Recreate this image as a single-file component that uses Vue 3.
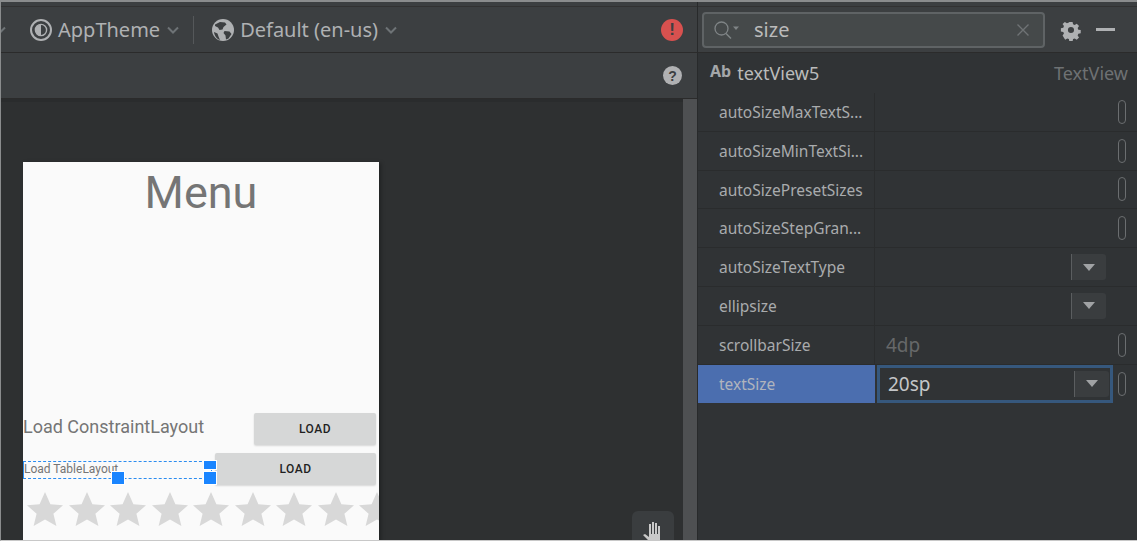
<script setup>
const rows = [
  { name: 'autoSizeMaxTextS...', kind: 'toggle' },
  { name: 'autoSizeMinTextSi...', kind: 'toggle' },
  { name: 'autoSizePresetSizes', kind: 'toggle' },
  { name: 'autoSizeStepGran...', kind: 'toggle' },
  { name: 'autoSizeTextType', kind: 'select' },
  { name: 'ellipsize', kind: 'select' },
  { name: 'scrollbarSize', kind: 'value', value: '4dp' },
]
const stars = Array.from({ length: 9 })
</script>

<template>
  <div class="frame">
    <section class="editor">
      <div class="toolbar top">
        <svg class="chev first" viewBox="0 0 12 8" width="12" height="8"><path d="M1 1.5 6 6.5 11 1.5" /></svg>
        <svg class="icon theme" viewBox="0 0 24 24" width="24" height="24">
          <circle cx="12" cy="12" r="10" fill="none" stroke="#afb1b3" stroke-width="2" />
          <circle cx="12" cy="12" r="5.6" fill="none" stroke="#afb1b3" stroke-width="1.4" />
          <path d="M12 6.4a5.6 5.6 0 0 0 0 11.2z" fill="#afb1b3" />
        </svg>
        <span class="tool-label theme-label">AppTheme</span>
        <svg class="chev" viewBox="0 0 12 8" width="12" height="8"><path d="M1 1.5 6 6.5 11 1.5" /></svg>
        <span class="vsep"></span>
        <svg class="icon globe" viewBox="0 0 24 24" width="24" height="24">
          <circle cx="12" cy="12" r="11" fill="#afb1b3" />
          <path d="M4 6.5 9 4l5 .5 1.500 2-3 2.500-1 2.500-3 .5-1.500-2.500L4 8zM13.500 13l5 .5 2 2.500-3 4.500-2.500 1-.5-4-2-2.500zM3 14l3.500 1.500 1 3 1.500 3.500C6 21 3.500 18 3 14z" fill="#3c3f41" />
        </svg>
        <span class="tool-label">Default (en-us)</span>
        <svg class="chev" viewBox="0 0 12 8" width="12" height="8"><path d="M1 1.5 6 6.5 11 1.5" /></svg>
        <span class="spring"></span>
        <span class="badge error">!</span>
      </div>
      <div class="toolbar second">
        <span class="spring"></span>
        <span class="badge help">?</span>
      </div>
      <div class="canvas">
        <div class="device">
          <h1 class="menu-title">Menu</h1>
          <div class="row-one">
            <span class="load-big">Load ConstraintLayout</span>
            <span class="android-btn small">LOAD</span>
          </div>
          <div class="row-two">
            <div class="selected">
              <span class="load-small">Load TableLayout</span>
              <i class="handle h-bottom"></i>
              <i class="handle h-right-top"></i>
              <i class="handle h-right-bottom"></i>
            </div>
            <span class="android-btn wide">LOAD</span>
          </div>
          <div class="stars">
            <svg v-for="(s, i) in stars" :key="i" class="star" viewBox="0 0 36 34" width="36" height="34">
              <path d="M18 0l5.400 12.200 12.600 1-9.600 8.600 3 12.200L18 27.400 6.600 34l3-12.200L0 13.200l12.600-1z" />
            </svg>
          </div>
        </div>
        <div class="hand-box">
          <svg viewBox="0 0 24 28" width="24" height="28">
            <path d="M8 22 2 16l2-1 4 3V5h2v10h1V3h2v12h1V4h2v11h1V7h2v15z" fill="#c9c9c9" />
          </svg>
        </div>
        <div class="scrollbar"></div>
      </div>
    </section>

    <aside class="panel">
      <div class="search-row">
        <div class="search">
          <svg class="loupe" viewBox="0 0 28 20" width="28" height="20">
            <circle cx="8.500" cy="8.500" r="6.500" fill="none" stroke="#7f8486" stroke-width="1.300" />
            <path d="M13 13.500 18 18.500" stroke="#7f8486" stroke-width="1.500" />
            <path d="M20 6.500h6l-3 3.500z" fill="#7f8486" />
          </svg>
          <span class="query">size</span>
          <svg class="clear" viewBox="0 0 12 12" width="12" height="12"><path d="M.5.5l11 11M11.500.5l-11 11" /></svg>
        </div>
        <svg class="gear" viewBox="0 0 24 24" width="22" height="22">
          <path fill-rule="evenodd" d="M10 2h4l.6 3 2 .9 2.600-1.700 2.800 2.800-1.700 2.600.8 2 3 .6v4l-3 .6-.8 2 1.700 2.600-2.800 2.800-2.600-1.700-2 .8-.6 3h-4l-.6-3-2-.8-2.600 1.700L1.600 19l1.700-2.600-.8-2-3-.6v-4l3-.6.8-2L1.600 4.600 4.400 2l2.600 1.700 2.400-.8zM12 8.200a3.800 3.800 0 1 0 0 7.600 3.800 3.800 0 0 0 0-7.600z" fill="#afb1b3" transform="translate(1.400 1.400) scale(.88)" />
        </svg>
        <span class="minimize"></span>
      </div>
      <div class="title-row">
        <span class="ab">Ab</span>
        <span class="view-id">textView5</span>
        <span class="view-type">TextView</span>
      </div>
      <div v-for="row in rows" :key="row.name" class="attr">
        <div class="attr-name">{{ row.name }}</div>
        <div class="attr-value">
          <span v-if="row.kind === 'value'" class="muted">{{ row.value }}</span>
          <span v-if="row.kind === 'select'" class="dd"><i></i></span>
          <span v-if="row.kind !== 'select'" class="pill"></span>
        </div>
      </div>
      <div class="attr active">
        <div class="attr-name">textSize</div>
        <div class="attr-value">
          <div class="input">
            <span>20sp</span>
            <span class="dd"><i></i></span>
          </div>
          <span class="pill"></span>
        </div>
      </div>
    </aside>
  </div>
</template>

<style>
html, body { margin: 0; background: #2f3233; overflow: hidden; }
</style>

<style scoped>
.frame {
  box-sizing: border-box;
  width: 1137px;
  height: 541px;
  display: flex;
  border-top: 2px solid #8a8c8d;
  border-left: 1px solid #8a8c8d;
  border-bottom: 1px solid #c8c8c8;
  background: #313335;
  font-family: "Noto Sans", "Open Sans", sans-serif;
  overflow: hidden;
}
.editor { width: 696px; display: flex; flex-direction: column; flex: none; }
.toolbar {
  display: flex;
  align-items: center;
  box-sizing: border-box;
  background: #3c3f41;
}
.top {
  height: 51px;
  padding: 5px 14px 0 0;
  border-bottom: 1px solid #2b2b2b;
  box-shadow: inset 0 4px 0 #3c3f41, inset 0 5px 0 #323232;
}
.second { height: 46px; padding-right: 15px; border-bottom: 1px solid #2b2b2b; }
.chev { fill: none; stroke: #6e7376; stroke-width: 2; flex: none; }
.chev.first { margin-left: -7px; margin-right: 23px; }
.icon { flex: none; }
.tool-label { color: #afb1b3; font-size: 20px; margin-left: 5px; margin-right: 7px; white-space: nowrap; }
.vsep { width: 1px; height: 28px; background: #55585a; margin: 0 17px 0 14px; }
.spring { flex: 1; }
.badge {
  width: 22px;
  height: 22px;
  border-radius: 50%;
  display: flex;
  align-items: center;
  justify-content: center;
  font-family: "Liberation Sans", sans-serif;
  font-weight: 700;
  font-size: 17px;
}
.error { background: #d8514f; color: #3c3f41; }
.help { width: 19px; height: 19px; background: #b0b1b3; color: #3c3f41; font-size: 14px; }
.canvas {
  flex: 1;
  position: relative;
  background: #2e3031;
  box-shadow: inset 0 3px 0 #2a2c2d;
  padding: 63px 0 0 22px;
  overflow: hidden;
}
.device {
  width: 356px;
  height: 400px;
  background: #fafafa;
  box-shadow: 2px 1px 4px rgba(0, 0, 0, .3);
  overflow: hidden;
}
.menu-title {
  margin: 0;
  text-align: center;
  font: 400 45px/61px Roboto, sans-serif;
  color: #757575;
}
.row-one {
  display: flex;
  align-items: center;
  justify-content: space-between;
  margin-top: 190px;
  padding-right: 3px;
}
.load-big { font: 400 18px/32px Roboto, sans-serif; color: #757575; position: relative; top: -2px; }
.android-btn {
  display: flex;
  align-items: center;
  justify-content: center;
  background: #d6d7d7;
  color: #1f1f1f;
  font: 500 12px/1 Roboto, sans-serif;
  letter-spacing: .5px;
  border-radius: 2px;
  box-shadow: 0 1px 2px rgba(0, 0, 0, .14);
}
.small { width: 122px; height: 32px; }
.row-two { display: flex; align-items: flex-start; margin-top: 8px; padding-right: 3px; justify-content: space-between; }
.wide { width: 161px; height: 32px; }
.selected {
  position: relative;
  box-sizing: border-box;
  width: 189px;
  height: 18px;
  margin-top: 8px;
  border: 1px solid #2b8cf0;
  border-style: dashed solid;
}
.load-small { display: block; font: 400 12px/14px Roboto, sans-serif; color: #757575; white-space: nowrap; }
.handle {
  position: absolute;
  width: 12px;
  height: 12px;
  background: #1a85ff;
  border: 1px solid #fff;
}
.h-bottom { left: 87px; top: 9px; }
.h-right-top { right: -6px; top: -2px; height: 8px; }
.h-right-bottom { right: -6px; top: 9px; }
.stars { display: flex; gap: 5.500px; padding: 7px 0 0 4px; width: 380px; }
.star { flex: none; fill: #d8d8d8; }
.hand-box {
  position: absolute;
  left: 631px;
  top: 412px;
  width: 42px;
  height: 42px;
  background: #3a3d3f;
  border-radius: 6px;
  display: flex;
  justify-content: center;
  padding-top: 8px;
  box-sizing: border-box;
}
.scrollbar { position: absolute; right: 0; top: 0; bottom: 0; width: 14px; background: #4e5052; }
.panel {
  flex: 1;
  background: #303335;
  border-left: 1px solid #282a2b;
  box-sizing: border-box;
}
.search-row {
  box-sizing: border-box;
  height: 51px;
  padding: 5px 11px 0 4px;
  display: flex;
  align-items: center;
  background: #3c3f41;
  border-bottom: 1px solid #2b2b2b;
  box-shadow: inset 0 4px 0 #3c3f41, inset 0 5px 0 #323232;
}
.search {
  box-sizing: border-box;
  width: 343px;
  height: 36px;
  border: 2px solid #5f6365;
  border-radius: 4px;
  background: #45494a;
  display: flex;
  align-items: center;
  padding: 0 14px 0 9px;
}
.query { color: #bbbbbb; font-size: 20px; margin-left: 13px; flex: 1; }
.clear { fill: none; stroke: #6f7375; stroke-width: 1.400; }
.gear { margin-left: 15px; flex: none; }
.minimize { width: 19px; height: 3px; background: #afb1b3; margin-left: 14px; }
.title-row {
  display: flex;
  align-items: center;
  height: 40px;
  padding: 0 9px 0 12px;
  color: #bbbbbb;
}
.ab { font: 700 16px/1 "Noto Sans", sans-serif; color: #a4a7a9; position: relative; top: -2px; }
.view-id { font-size: 18px; margin-left: 6px; flex: 1; }
.view-type { font-size: 18px; color: #6e7173; }
.attr {
  display: flex;
  height: 38.800px;
  box-sizing: border-box;
  border-bottom: 1px solid #2a2c2d;
  color: #a9abad;
}
.attr-name {
  box-sizing: border-box;
  width: 177px;
  padding-left: 21px;
  font-size: 15.500px;
  line-height: 38px;
  border-right: 1px solid #2a2c2d;
  white-space: nowrap;
  overflow: hidden;
}
.attr-value {
  flex: 1;
  display: flex;
  align-items: center;
  justify-content: flex-end;
  position: relative;
  padding-right: 11px;
}
.muted { position: absolute; left: 11px; color: #666869; font-size: 19px; top: 6px; }
.pill {
  box-sizing: border-box;
  width: 8px;
  height: 24px;
  border: 1.500px solid #6b6e70;
  border-radius: 4px;
  flex: none;
}
.dd {
  box-sizing: border-box;
  width: 35px;
  height: 26px;
  background: #3a3d3f;
  border-left: 1px solid #5b5e60;
  border-radius: 0 3px 3px 0;
  display: flex;
  align-items: center;
  justify-content: center;
  flex: none;
}
.attr-value > .dd { margin-right: 20px; }
.dd i {
  width: 0;
  height: 0;
  border-left: 6px solid transparent;
  border-right: 6px solid transparent;
  border-top: 7px solid #a0a2a4;
}
.active .attr-name { background: #4b6eaf; color: #b0b4bd; border-right: 0; }
.active { border-bottom: 0; }
.input {
  box-sizing: border-box;
  flex: none;
  width: 236px;
  height: 38px;
  margin-left: 2px;
  margin-right: 5px;
  border: 3px solid #36587d;
  display: flex;
  align-items: center;
  justify-content: space-between;
  padding: 0 1px 0 8px;
  color: #c4c6c8;
  font-size: 19px;
}
.active .attr-value { padding-right: 11px; justify-content: flex-start; }
</style>
